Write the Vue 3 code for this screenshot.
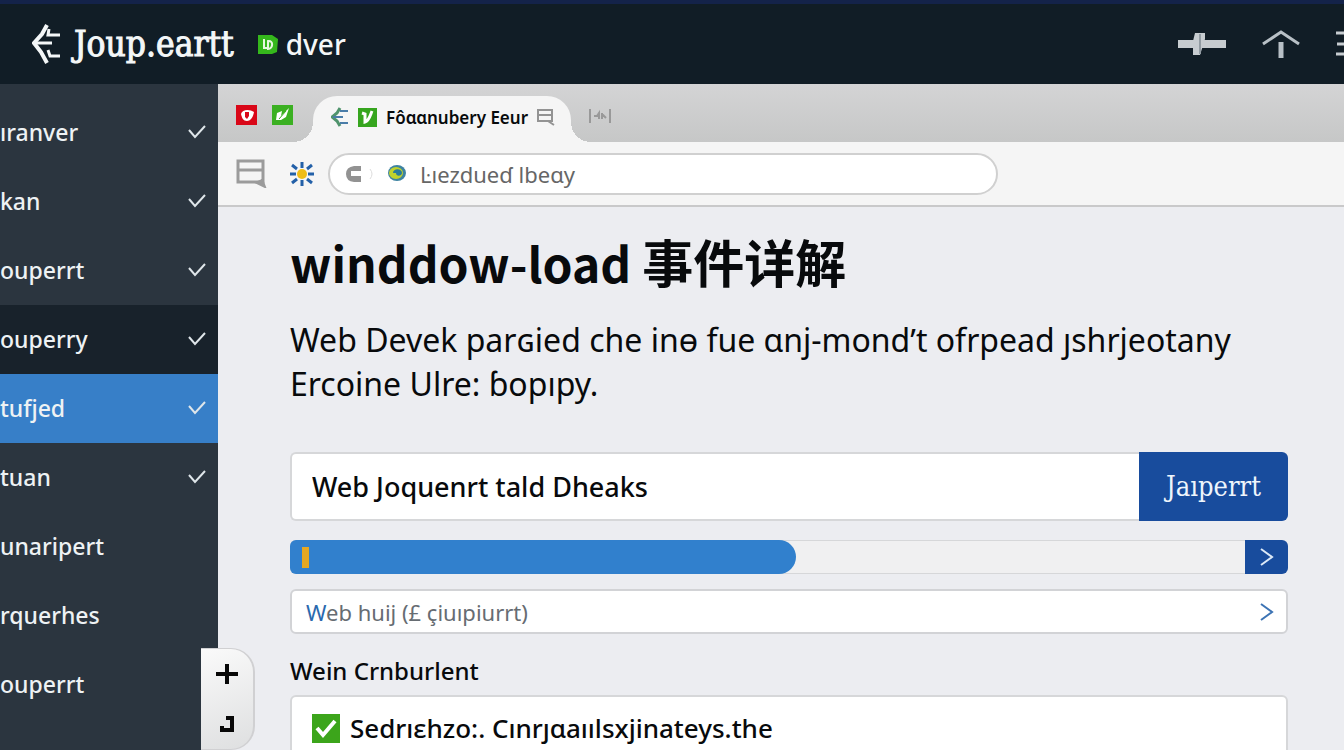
<template>
    <div class="app">
        <header class="topbar">
            <a href="#" class="brand">
                <svg width="30" height="42" viewBox="0 0 30 42" fill="none" stroke="#f4f7f8" stroke-width="3">
                    <path d="M15 2 10 11 2 20l7 9 6 11" stroke-width="4" />
                    <path d="M3 20h17M17 6l-1 6h12M16 27l2 6h10" />
                </svg>
                <span class="brand-name">Joup.eartt</span>
            </a>
            <a href="#" class="brand-sub">
                <svg width="20" height="20" viewBox="0 0 20 20">
                    <path d="M0 1h14l6 4-1 13-5 2H0z" fill="#35b81c" />
                    <path d="M6 5v9h3M10 7c6-1 5 8 0 8z" fill="none" stroke="#e6f8df" stroke-width="2" />
                </svg>
                <span>dver</span>
            </a>
            <div class="top-actions">
                <button type="button" aria-label="Add">
                    <svg width="48" height="24" viewBox="0 0 48 24" fill="#c7ccd0">
                        <path d="M0 8h48v8H0z" />
                        <path d="M17 1h10v6l-5 16h-7V9z" />
                        <path d="M22 2v20" stroke="#929ba2" stroke-width="2" />
                    </svg>
                </button>
                <button type="button" aria-label="Upload">
                    <svg width="38" height="30" viewBox="0 0 38 30" fill="none" stroke="#b8c0c6">
                        <path d="M1 15 19 3l18 12" stroke-width="3" />
                        <path d="M19 13v16" stroke-width="5" />
                    </svg>
                </button>
                <button type="button" aria-label="Menu">
                    <svg width="28" height="26" viewBox="0 0 28 26" stroke="#c7ccd0" stroke-width="3">
                        <path d="M0 2h28M1 13h27M0 23h28" />
                    </svg>
                </button>
            </div>
        </header>

        <div class="layout">
            <nav class="sidebar">
                <a
                    v-for="(item, index) in menu"
                    :key="index"
                    href="#"
                    class="menu-item"
                    :class="{ hovered: item.hovered, active: index === activeIndex }"
                    @click.prevent="activeIndex = index"
                >
                    <span>{{ item.label }}</span>
                    <svg v-if="item.checked" width="18" height="14" viewBox="0 0 18 14" fill="none" stroke="#dfe6ea" stroke-width="2">
                        <path d="m1 5 6 7L17 1" />
                    </svg>
                </a>
            </nav>

            <div class="browser">
                <div class="tabs">
                    <div class="pinned">
                        <svg width="21" height="20" viewBox="0 0 21 20">
                            <path d="M0 0h21v20H0z" fill="#d90718" />
                            <path d="M5 9c1-5 9-5 13-2-1 6-4 9-7 9-4 0-5-3-6-7z" fill="#fff" />
                            <path d="M9 7h4v4l-2 3-2-2z" fill="#d90718" />
                        </svg>
                        <svg width="21" height="20" viewBox="0 0 21 20">
                            <path d="M0 0h21v20H0z" fill="#3bb022" />
                            <path d="M4 15 5 8l5-2-1 5 8-8-3 9-5 3z" fill="#fff" />
                            <path d="m7 14 7-8" stroke="#3bb022" />
                        </svg>
                    </div>
                    <a href="#" class="tab">
                        <svg width="18" height="20" viewBox="0 0 18 20" fill="none" stroke-width="2">
                            <path d="M9 1 6 6l-5 4 5 4 3 5" stroke="#4f936c" stroke-width="3" />
                            <path d="M2 10h10M9 4h8M9 16h8" stroke="#497ca8" />
                        </svg>
                        <svg width="19" height="19" viewBox="0 0 19 19">
                            <path d="M0 0h19v19H0z" fill="#36a51e" />
                            <path d="m4 5 3 1v8c4-1 5-6 7-11" fill="none" stroke="#fff" stroke-width="3" />
                        </svg>
                        <span>Fôɑɑnubery Eeur</span>
                        <svg width="18" height="17" viewBox="0 0 18 17" fill="none" stroke="#939393" stroke-width="2">
                            <path d="M1 1h14v11H1zM1 6h14M11 12l6 4" />
                        </svg>
                    </a>
                    <button type="button" class="tab-extra" aria-label="Split tab">
                        <svg width="22" height="16" viewBox="0 0 22 16" fill="none" stroke="#999" stroke-width="2">
                            <path d="M1 1v14M21 1v14M5 8h3l2-3v6M13 5v6M13 6l4 4" />
                        </svg>
                    </button>
                </div>

                <div class="toolbar">
                    <button type="button" aria-label="Pages">
                        <svg width="31" height="29" viewBox="0 0 31 29" fill="none" stroke="#9b9b9b" stroke-width="3">
                            <path d="M2 2h25v21H2zM2 11h25" />
                            <path d="m19 23 10 5-3-8" fill="#9b9b9b" stroke-width="2" />
                        </svg>
                    </button>
                    <button type="button" aria-label="Theme">
                        <svg width="24" height="24" viewBox="0 0 24 24">
                            <path d="M12 0v6M12 18v6M0 12h6M18 12h6M2 3l5 4M17 17l5 4M22 3l-5 4M7 17l-5 4" stroke="#2360a8" stroke-width="3" />
                            <circle cx="12" cy="12" r="5" fill="#efbd18" />
                        </svg>
                    </button>
                    <label class="address">
                        <svg width="28" height="16" viewBox="0 0 28 16">
                            <path d="M15 0v16H8Q0 15 0 8t8-8z" fill="#929292" />
                            <path d="M5 5h10v5H5z" fill="#fff" />
                            <path d="M24 3q4 5 0 10" fill="none" stroke="#ddd" />
                        </svg>
                        <svg width="18" height="17" viewBox="0 0 18 17">
                            <ellipse cx="9" cy="8" rx="9" ry="8" fill="#3e83a1" />
                            <ellipse cx="8" cy="8" rx="7" ry="6" fill="#bfd22c" />
                            <path d="M5 8c0-5 9-5 9 0 0 3-6 4-6 0h3" fill="#287b9b" />
                        </svg>
                        <input v-model="address" type="text" aria-label="Address">
                    </label>
                </div>

                <main class="content">
                    <h1>winddow-load <span>事件详解</span></h1>
                    <p class="intro">
                        Web Devek parɢied che inɵ fue ɑnj-mondʼt ofrpead ȷshrjeotany<br>
                        Ercoine Ulre: ɓopıpy.
                    </p>

                    <form class="search" @submit.prevent>
                        <input v-model="query" type="text" aria-label="Search">
                        <button type="submit">Jaıperrt</button>
                    </form>

                    <div class="progress">
                        <div class="track" role="progressbar" aria-label="Loading" :aria-valuenow="progress">
                            <div class="fill" :style="{ width: progress + '%' }"></div>
                        </div>
                        <button type="button" aria-label="Next">
                            <svg width="14" height="20" viewBox="0 0 14 20" fill="none" stroke="#dce9f7" stroke-width="2">
                                <path d="m1 2 11 8-11 8" />
                            </svg>
                        </button>
                    </div>

                    <button type="button" class="link-row">
                        <span><span class="lead">W</span>eb huij (£ çiuıpiurrt)</span>
                        <svg width="14" height="20" viewBox="0 0 14 20" fill="none" stroke="#3c73b4" stroke-width="2">
                            <path d="m1 2 11 8-11 8" />
                        </svg>
                    </button>

                    <h2>Wein Crnburlent</h2>
                    <div class="panel">
                        <label class="check">
                            <span class="box">
                                <input v-model="done" type="checkbox">
                                <svg v-if="done" width="28" height="29" viewBox="0 0 28 29" fill="none" stroke="#fff" stroke-width="4">
                                    <path d="m5 14 6 7L23 7" />
                                </svg>
                            </span>
                            <span>Sedrıɛhzo:. Cınrȷɑaıılsxjinateys.the</span>
                        </label>
                    </div>
                </main>
            </div>
        </div>

        <div class="zoom">
            <button type="button" aria-label="Zoom in">
                <svg width="22" height="20" viewBox="0 0 22 20" stroke="#080808" stroke-width="4">
                    <path d="M0 10h22M11 0v20" />
                </svg>
            </button>
            <button type="button" aria-label="Reset zoom">
                <svg width="14" height="16" viewBox="0 0 14 16" fill="none" stroke="#080808" stroke-width="4">
                    <path d="M6 2h6v12H2v-4" />
                </svg>
            </button>
        </div>
    </div>
</template>

<script setup>
import { ref } from 'vue';

const menu = [
    { label: 'ıranver', checked: true },
    { label: 'kan', checked: true },
    { label: 'ouperrt', checked: true },
    { label: 'ouperry', checked: true, hovered: true },
    { label: 'tufjed', checked: true },
    { label: 'tuan', checked: true },
    { label: 'unaripert' },
    { label: 'rquerhes' },
    { label: 'ouperrt' },
];

const activeIndex = ref(4);
const address = ref('Ŀıezdueɗ lbeɑy');
const query = ref('Web Joquenrt tald Dheaks');
const progress = ref(53);
const done = ref(true);
</script>

<style>
body { margin: 0; }
</style>

<style scoped>
.app {
    position: relative;
    display: flex;
    flex-direction: column;
    height: 100vh;
    overflow: hidden;
    background: #ecedf1;
    color: #080a0c;
    font-family: "Noto Sans", "Noto Sans CJK SC", sans-serif;
}
* { box-sizing: border-box; }
button { display: flex; align-items: center; padding: 0; border: 0; background: none; font: inherit; color: inherit; cursor: pointer; }
input { font: inherit; color: inherit; }
a { color: inherit; text-decoration: none; }
svg { display: block; flex: none; }

.topbar {
    display: flex;
    align-items: center;
    flex: none;
    height: 84px;
    padding-left: 32px;
    border-top: 4px solid #14234a;
    background: #111d26;
    color: #f4f7f8;
}
.brand { display: flex; align-items: center; gap: 12px; }
.brand-name { font-family: "DejaVu Serif Condensed", "DejaVu Serif", serif; font-size: 35px; -webkit-text-stroke: 1px; }
.brand-sub { display: flex; align-items: center; gap: 8px; margin-left: 24px; font-size: 28px; font-weight: 500; }
.top-actions { display: flex; align-items: center; gap: 36px; margin-left: auto; margin-right: -20px; }

.layout { display: flex; flex: 1; min-height: 0; }
.sidebar { flex: none; width: 218px; padding-top: 14px; background: #2b353f; color: #eef2f4; }
.menu-item {
    display: flex;
    align-items: center;
    justify-content: space-between;
    height: 69px;
    padding: 0 12px 2px 0;
    font-size: 23px;
    font-weight: 500;
}
.menu-item.hovered { background: #18222b; }
.menu-item.active { background: #377fc8; }

.browser { flex: 1; min-width: 0; }
.tabs { display: flex; align-items: flex-end; height: 58px; background: linear-gradient(#d4d4d5, #c6c7c7); }
.pinned { display: flex; gap: 15px; align-self: center; padding: 4px 20px 0 18px; }
.tab {
    position: relative;
    display: flex;
    align-items: center;
    gap: 9px;
    height: 46px;
    padding: 0 16px 4px 18px;
    border-radius: 24px 24px 0 0;
    background: #f5f5f5;
    font-size: 17px;
    font-weight: 600;
    white-space: nowrap;
}
.tab::before, .tab::after {
    content: "";
    position: absolute;
    bottom: 0;
    width: 20px;
    height: 20px;
}
.tab::before { right: 100%; background: radial-gradient(circle at 0 0, transparent 20px, #f5f5f5 20px); }
.tab::after { left: 100%; background: radial-gradient(circle at 100% 0, transparent 20px, #f5f5f5 20px); }
.tab-extra { align-self: center; margin-left: 18px; padding-top: 6px; }

.toolbar { display: flex; align-items: center; height: 65px; padding-left: 18px; border-bottom: 2px solid #c9c9ca; background: #f5f5f5; }
.toolbar button + button { margin-left: 23px; }
.address {
    display: flex;
    align-items: center;
    gap: 14px;
    width: 670px;
    height: 42px;
    margin-left: 14px;
    padding: 0 16px;
    border: 2px solid #d0d0d0;
    border-radius: 21px;
    background: #fff;
    color: #666;
    font-size: 22px;
}
.address input { flex: 1; min-width: 0; padding: 0; border: 0; outline: 0; background: none; }

.content { padding: 22px 56px 0 72px; }
h1 { margin: 0; font-family: "Noto Sans CJK SC", sans-serif; font-size: 48px; line-height: 64px; font-weight: 700; white-space: nowrap; }
h1 span { font-size: 51px; }
.intro { margin: 24px 0 46px; font-size: 32px; line-height: 44px; white-space: nowrap; }

.search { display: flex; height: 69px; }
.search input {
    flex: 1;
    min-width: 0;
    padding: 0 20px;
    border: 2px solid #d6d7d9;
    border-right: 0;
    border-radius: 6px 0 0 6px;
    outline: 0;
    background: #fff;
    font-size: 27px;
    font-weight: 500;
}
.search button {
    justify-content: center;
    width: 149px;
    border-radius: 0 6px 6px 0;
    background: #184c9d;
    color: #eef5fc;
    font-family: "DejaVu Serif Condensed", "DejaVu Serif", serif;
    font-size: 27px;
}

.progress { display: flex; height: 34px; margin-top: 19px; }
.track { flex: 1; border: solid #d6d7d9; border-width: 1px 0; border-radius: 6px 0 0 6px; background: #f0f0f1; }
.fill { display: flex; align-items: center; height: 34px; margin-top: -1px; padding-left: 12px; border-radius: 6px 17px 17px 6px; background: #3180cd; }
.fill::before { content: ""; width: 7px; height: 21px; background: #e5a823; }
.progress button { justify-content: center; width: 43px; border-radius: 0 6px 6px 0; background: #184c9d; }

.link-row {
    justify-content: space-between;
    width: 100%;
    height: 45px;
    margin-top: 15px;
    padding: 0 12px 0 14px;
    border: 2px solid #d2d3d6;
    border-radius: 6px;
    background: #fff;
    color: #666c72;
    font-size: 22px;
}
.lead { color: #2a69ae; }

h2 { margin: 19px 0 6px; font-size: 24px; line-height: 36px; font-weight: 500; }
.panel { height: 120px; padding: 15px 20px; border: 2px solid #d6d7d9; border-radius: 6px; background: #fff; }
.check { display: flex; align-items: center; gap: 10px; font-size: 26px; line-height: 32px; font-weight: 500; white-space: nowrap; }
.box { display: grid; }
.box input { grid-area: 1 / 1; appearance: none; width: 28px; height: 29px; margin: 0; background: #3ca51b; }
.box svg { grid-area: 1 / 1; pointer-events: none; }

/* floats over the sidebar edge */
.zoom {
    position: absolute;
    left: 201px;
    bottom: 0;
    display: flex;
    flex-direction: column;
    align-items: center;
    gap: 32px;
    width: 54px;
    height: 102px;
    padding-top: 15px;
    border: solid #d0d0d2;
    border-width: 1px 2px 1px 0;
    border-radius: 0 24px 24px 0;
    background: linear-gradient(160deg, #fafafa, #dedfe0);
}
</style>
